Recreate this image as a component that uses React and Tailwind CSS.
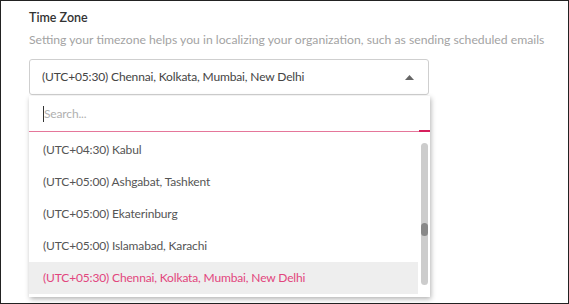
import React from 'react';

const zones = [
    '(UTC+04:30) Kabul',
    '(UTC+05:00) Ashgabat, Tashkent',
    '(UTC+05:00) Ekaterinburg',
    '(UTC+05:00) Islamabad, Karachi',
    '(UTC+05:30) Chennai, Kolkata, Mumbai, New Delhi',
];

const selected = '(UTC+05:30) Chennai, Kolkata, Mumbai, New Delhi';

export default function App() {
    return (
        <div
            className="w-[569px] h-[304px] bg-white border border-[#222] overflow-hidden"
            style={{ fontFamily: 'Lato, "Open Sans", sans-serif' }}
        >
            <div className="pl-[28px] pt-[8px]">
                <div className="text-[12.5px] font-semibold text-[#333] leading-[18px]">Time Zone</div>
                <div className="mt-[4px] text-[12.2px] text-[#a3a3a3] leading-[18px] whitespace-nowrap">
                    Setting your timezone helps you in localizing your organization, such as sending scheduled emails
                </div>

                {/* Select */}
                <div className="mt-[10px] w-[400px] h-[36px] border border-[#cfcfcf] rounded-[3px] flex items-center justify-between pl-[12px] pr-[12px]">
                    <span className="text-[12px] tracking-[-0.15px] text-[#444]">{selected}</span>
                    <svg width="9" height="5" viewBox="0 0 9 5" className="mr-[2px]">
                        <path d="M0 5 L4.5 0 L9 5 Z" fill="#666" />
                    </svg>
                </div>

                {/* Dropdown */}
                <div className="mt-[1px] w-[401px] h-[201px] bg-white shadow-[1px_2px_5px_rgba(0,0,0,0.3)] flex flex-col">
                    <div className="relative h-[36px] flex items-center pl-[14px] border-b border-[#e5769a]">
                        <span className="w-px h-[16px] bg-[#333]" />
                        <span className="text-[12px] tracking-[-0.15px] text-[#b0b0b0]">Search...</span>
                        <span className="absolute right-0 bottom-[-1px] w-[11px] h-[2px] bg-[#d61f5c]" />
                    </div>
                    <div className="flex flex-1 min-h-0">
                        <div className="flex-1 flex flex-col pt-[2px]">
                            {zones.map((z) => (
                                <div
                                    key={z}
                                    className={
                                        z === selected
                                            ? 'h-[32px] flex items-center pl-[14px] text-[12px] tracking-[-0.15px] text-[#e2457d] bg-[#eeeeee]'
                                            : 'h-[32px] flex items-center pl-[14px] text-[12px] tracking-[-0.15px] text-[#555]'
                                    }
                                >
                                    {z}
                                </div>
                            ))}
                        </div>
                        <div className="w-[12px] flex justify-center pt-[11px] pb-[12px]">
                            <div className="w-[7px] h-full bg-[#cccccc] rounded-full flex flex-col">
                                <div className="h-[80px]" />
                                <div className="h-[13px] bg-[#888] rounded-full" />
                            </div>
                        </div>
                    </div>
                </div>
            </div>
        </div>
    );
}
